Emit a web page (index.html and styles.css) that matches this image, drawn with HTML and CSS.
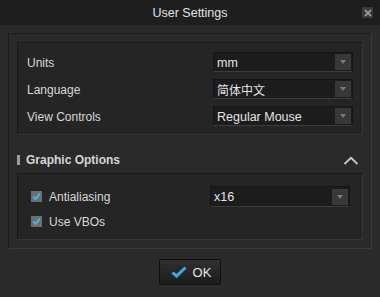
FILE: index.html
```html
<!DOCTYPE html>
<html lang="en">
<head>
    <meta charset="UTF-8">
    <title>User Settings</title>
    <link rel="stylesheet" href="styles.css">
</head>
<body>
    <div class="titlebar">
        <span></span>
        <span class="title">User Settings</span>
        <button class="close">
            <svg width="8" height="8" viewBox="0 0 8 8"><path d="M1 1L7 7M7 1L1 7" stroke="#a8a8a8" stroke-width="1.6"/></svg>
        </button>
    </div>

    <div class="panel">
        <div class="box general">
            <label>Units</label>
            <div class="select"><span>mm</span><i class="arrow"></i></div>
            <label>Language</label>
            <div class="select"><span class="cjk">简体中文</span><i class="arrow"></i></div>
            <label>View Controls</label>
            <div class="select"><span>Regular Mouse</span><i class="arrow"></i></div>
        </div>

        <div class="section-head">
            <span class="mark"></span>
            <span class="section-title">Graphic Options</span>
            <svg class="chevron" width="16" height="9" viewBox="0 0 16 9"><path d="M1.5 8L8 1.8L14.5 8" fill="none" stroke="#c8c8c8" stroke-width="1.8"/></svg>
        </div>

        <div class="box graphic">
            <div class="opt-row">
                <span class="check"><svg width="11" height="11" viewBox="0 0 11 11"><path d="M2.2 5.6L4.5 8L9 2.6" fill="none" stroke="#3fb6f0" stroke-width="2"/></svg></span>
                <span class="opt-label">Antialiasing</span>
                <div class="select small"><span>x16</span><i class="arrow"></i></div>
            </div>
            <div class="opt-row">
                <span class="check"><svg width="11" height="11" viewBox="0 0 11 11"><path d="M2.2 5.6L4.5 8L9 2.6" fill="none" stroke="#3fb6f0" stroke-width="2"/></svg></span>
                <span class="opt-label">Use VBOs</span>
            </div>
        </div>
    </div>

    <div class="footer">
        <button class="ok">
            <svg width="16" height="12" viewBox="0 0 16 12"><path d="M1.5 6.5L5.5 10.2L14.5 1.5" fill="none" stroke="#3aa9e4" stroke-width="3"/></svg>
            <span>OK</span>
        </button>
    </div>
</body>
</html>
```

FILE: styles.css
```css
body {
    margin: 0;
    background: #2b2b2b;
    font-family: 'Liberation Sans', Arial, sans-serif;
    font-size: 12px;
    color: #d6d6d6;
}
.titlebar {
    height: 25px;
    background: #1e1e1e;
    display: grid;
    grid-template-columns: 1fr auto 1fr;
    align-items: center;
}
.title {
    font-size: 12.5px;
    color: #e2e2e2;
}
.close {
    justify-self: end;
    margin-right: 7px;
    width: 11px;
    height: 11px;
    padding: 0;
    border: none;
    background: #3a3a3a;
    display: flex;
    align-items: center;
    justify-content: center;
}
.panel {
    margin: 8px 8px 0 8px;
    border: 1px solid #1c1c1c;
    border-bottom-color: #3a3a3a;
    border-right-color: #3a3a3a;
    background: #2a2a2a;
    padding: 8px 8px 8px 8px;
}
.box {
    border: 1px solid #191919;
    border-bottom-color: #363636;
    border-right-color: #363636;
    background: #252525;
}
.general {
    display: grid;
    grid-template-columns: 1fr 140px;
    row-gap: 7px;
    align-items: center;
    padding: 9px 9px 8px 9px;
}
.general label {
    color: #d8d8d8;
    padding-top: 2px;
}
.select {
    height: 20px;
    box-sizing: border-box;
    border: 1px solid #151515;
    border-bottom-color: #3c3c3c;
    background: #1c1c1c;
    display: flex;
    align-items: center;
    padding-left: 3px;
    color: #e4e4e4;
    font-size: 12.5px;
}
.select span {
    flex: 1;
    padding-top: 1px;
}
.cjk {
    font-family: 'Noto Sans CJK SC', sans-serif;
    font-size: 12px;
}
.arrow {
    width: 16px;
    height: 16px;
    margin-right: 1px;
    background: #383838;
    position: relative;
}
.arrow::after {
    content: '';
    position: absolute;
    left: 5px;
    top: 6px;
    border-left: 3px solid transparent;
    border-right: 3px solid transparent;
    border-top: 4px solid #7a7a7a;
}
.section-head {
    display: flex;
    align-items: center;
    height: 38px;
    padding-top: 12px;
    box-sizing: border-box;
}
.mark {
    width: 3px;
    height: 10px;
    background: #9a9a9a;
}
.section-title {
    margin-left: 6px;
    font-weight: bold;
    color: #d6d6d6;
    flex: 1;
}
.chevron {
    margin-right: 4px;
}
.graphic {
    padding: 12px 12px 8px 13px;
    height: 67px;
    box-sizing: border-box;
}
.opt-row {
    display: flex;
    align-items: center;
    height: 21px;
    margin-bottom: 4px;
}
.check {
    width: 11px;
    height: 11px;
    background: #6e6e6e;
    display: flex;
}
.opt-label {
    margin-left: 7px;
    flex: 1;
    color: #d8d8d8;
}
.select.small {
    width: 140px;
    height: 21px;
}
.footer {
    display: flex;
    justify-content: center;
    padding-top: 10px;
}
.ok {
    width: 62px;
    height: 26px;
    border: 1px solid #111;
    border-radius: 2px;
    background: linear-gradient(#303030, #1c1c1c);
    display: flex;
    align-items: center;
    justify-content: center;
    gap: 6px;
    color: #e6e6e6;
    font-family: 'Liberation Sans', Arial, sans-serif;
    font-size: 13px;
    padding: 0 0 0 2px;
}
```
